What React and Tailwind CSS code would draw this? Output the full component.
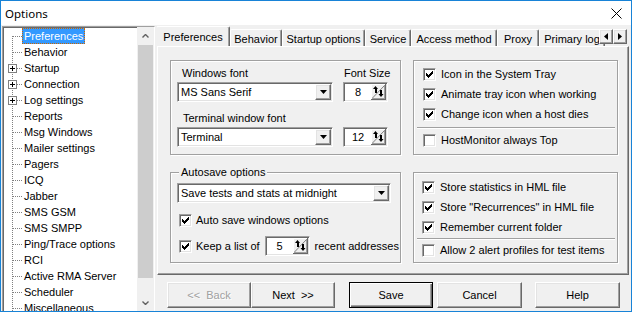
const SUNKEN = 'border border-t-[#a0a0a0] border-l-[#a0a0a0] border-r-white border-b-white shadow-[inset_1px_1px_0_#696969,inset_-1px_-1px_0_#e3e3e3]'
const RAISED = 'border border-t-white border-l-white border-r-[#696969] border-b-[#696969] shadow-[inset_-1px_-1px_0_#a0a0a0,inset_1px_1px_0_#e3e3e3]'
const ETCHED = 'border border-[#a0a0a0] shadow-[inset_1px_1px_0_#fff,1px_1px_0_#fff]'

const treeItems = [
  { label: 'Preferences', selected: true },
  { label: 'Behavior' },
  { label: 'Startup', plus: true },
  { label: 'Connection', plus: true },
  { label: 'Log settings', plus: true },
  { label: 'Reports' },
  { label: 'Msg Windows' },
  { label: 'Mailer settings' },
  { label: 'Pagers' },
  { label: 'ICQ' },
  { label: 'Jabber' },
  { label: 'SMS GSM' },
  { label: 'SMS SMPP' },
  { label: 'Ping/Trace options' },
  { label: 'RCI' },
  { label: 'Active RMA Server' },
  { label: 'Scheduler' },
  { label: 'Miscellaneous' },
]

const tabs = [
  { label: 'Preferences', w: 'w-[74px]', active: true },
  { label: 'Behavior', w: 'w-[52px]' },
  { label: 'Startup options', w: 'w-[83px]' },
  { label: 'Service', w: 'w-[46px]' },
  { label: 'Access method', w: 'w-[86px]' },
  { label: 'Proxy', w: 'w-[42px]' },
  { label: 'Primary log', w: 'w-[66px]' },
]

// classic 7x7 check mark, pixel by pixel
const CHECK = ['......#', '.....##', '#...###', '##.###.', '#####..', '.###...', '..#....']

function CheckBox({ checked }) {
  return (
    <span className={`w-[13px] h-[13px] shrink-0 bg-white flex items-center justify-center ${SUNKEN}`}>
      {checked && (
        <svg width="7" height="7" shapeRendering="crispEdges">
          {CHECK.flatMap((row, y) =>
            row.split('').map((c, x) => (c === '#' ? <rect key={`${x}-${y}`} x={x} y={y} width="1" height="1" fill="#000" /> : null))
          )}
        </svg>
      )}
    </span>
  )
}

function CheckRow({ label, checked = true }) {
  return (
    <div className="h-[20px] flex items-center gap-[5px] whitespace-nowrap">
      <CheckBox checked={checked} />
      <span>{label}</span>
    </div>
  )
}

function Combo({ value, w }) {
  return (
    <div className={`${w} h-[20px] bg-white p-[1px] flex items-stretch ${SUNKEN}`}>
      <span className="flex-1 pl-[2px] flex items-center whitespace-nowrap overflow-hidden">{value}</span>
      <span className={`w-[16px] bg-[#f0f0f0] flex items-center justify-center ${RAISED}`}>
        <svg width="7" height="4"><polygon points="0,0 7,0 3.5,4" fill="#000" /></svg>
      </span>
    </div>
  )
}

function UpDown() {
  return (
    <svg width="15" height="16" className="shrink-0" shapeRendering="crispEdges">
      <rect x="0" y="0" width="15" height="16" fill="#f0f0f0" />
      <line x1="0" y1="0.5" x2="15" y2="0.5" stroke="#fff" />
      <line x1="0.5" y1="0" x2="0.5" y2="16" stroke="#fff" />
      <line x1="0" y1="15.5" x2="15" y2="15.5" stroke="#696969" />
      <line x1="14.5" y1="0" x2="14.5" y2="16" stroke="#696969" />
      <line x1="1" y1="14.5" x2="14" y2="14.5" stroke="#a0a0a0" />
      <line x1="13.5" y1="1" x2="13.5" y2="15" stroke="#a0a0a0" />
      <line x1="1.5" y1="14" x2="13.5" y2="1.5" stroke="#808080" shapeRendering="auto" />
      <polygon points="4.5,2 2,5 7,5" fill="#000" shapeRendering="auto" />
      <rect x="4" y="5" width="2" height="4" fill="#000" />
      <rect x="9" y="6" width="2" height="4" fill="#000" />
      <polygon points="7.5,10 12.5,10 10,13" fill="#000" shapeRendering="auto" />
    </svg>
  )
}

function Spin({ value, w = 'w-[45px]' }) {
  return (
    <div className={`${w} h-[20px] bg-white p-[1px] flex items-center shrink-0 ${SUNKEN}`}>
      <span className="flex-1 text-center">{value}</span>
      <UpDown />
    </div>
  )
}

function TreeRow({ label, plus, selected, first }) {
  return (
    <div className="h-[16px] flex items-center whitespace-nowrap">
      <svg width="18" height="16" className="shrink-0" shapeRendering="crispEdges">
        <line x1="8.5" y1={first ? 8 : 0} x2="8.5" y2="16" stroke="#808080" strokeDasharray="1 1" />
        {plus ? (
          <>
            <rect x="4.5" y="4.5" width="8" height="8" fill="#fff" stroke="#808080" />
            <line x1="6" y1="8.5" x2="11" y2="8.5" stroke="#000" />
            <line x1="8.5" y1="6" x2="8.5" y2="11" stroke="#000" />
            <line x1="13" y1="8.5" x2="18" y2="8.5" stroke="#808080" strokeDasharray="1 1" />
          </>
        ) : (
          <line x1="9" y1="8.5" x2="18" y2="8.5" stroke="#808080" strokeDasharray="1 1" />
        )}
      </svg>
      {selected ? (
        <span className="h-[16px] leading-[14px] px-[1px] bg-[#3399ff] text-white border border-dotted border-[#cc6600]">{label}</span>
      ) : (
        <span className="px-[2px]">{label}</span>
      )}
    </div>
  )
}

function Chevron({ down }) {
  return (
    <svg width="7" height="4">
      <path d={down ? 'M0.5 0.5L3.5 3.5L6.5 0.5' : 'M0.5 3.5L3.5 0.5L6.5 3.5'} stroke="#606060" strokeWidth="1.4" fill="none" />
    </svg>
  )
}

function Button({ children, w, disabled, isDefault, className = '' }) {
  const frame = isDefault
    ? 'border border-black shadow-[inset_1px_1px_0_#fff,inset_-1px_-1px_0_#696969,inset_-2px_-2px_0_#a0a0a0]'
    : RAISED
  return (
    <div className={`${w} h-[26px] flex items-center justify-center whitespace-pre ${frame} ${disabled ? 'text-[#a0a0a0] [text-shadow:1px_1px_0_#fff]' : ''} ${className}`}>
      {children}
    </div>
  )
}

export default function App() {
  return (
    <div className="w-[632px] h-[312px] overflow-hidden border border-[#1883d7] bg-[#f0f0f0] flex flex-col text-[11px] leading-[13px] text-black font-['Liberation_Sans',Arial,sans-serif]">
      {/* title bar */}
      <div className="h-[24px] shrink-0 bg-white flex items-center justify-between pl-[4px] pr-[9px]">
        <span className="font-['Noto_Sans',sans-serif] text-[11.5px]">Options</span>
        <svg width="11" height="11">
          <path d="M0.5 0.5L10.5 10.5M10.5 0.5L0.5 10.5" stroke="#000" strokeWidth="1" />
        </svg>
      </div>

      <div className="flex-1 flex min-h-0">
        {/* tree */}
        <div className={`ml-[1px] mt-[1px] w-[153px] flex bg-white border border-b-0 border-t-[#a0a0a0] border-l-[#a0a0a0] border-r-white shadow-[inset_1px_1px_0_#696969,inset_-1px_0_0_#e3e3e3]`}>
          <div className="flex-1 overflow-hidden pl-[1px] pt-[1px]">
            {treeItems.map((it, i) => (
              <TreeRow key={it.label} {...it} first={i === 0} />
            ))}
          </div>
          <div className="w-[17px] shrink-0 bg-[#f0f0f0] flex flex-col">
            <div className="h-[18px] flex items-center justify-center">
              <Chevron />
            </div>
            <div className="h-[233px] mx-[1px] bg-[#cdcdcd]" />
            <div className="flex-1" />
            <div className="h-[17px] flex items-center justify-center">
              <Chevron down />
            </div>
          </div>
        </div>

        {/* right side */}
        <div className="ml-[2px] w-[472px] flex flex-col">
          <div className="relative h-[20px] mt-[1px] flex items-end shrink-0 overflow-hidden">
            {tabs.map((t) => (
              <div
                key={t.label}
                className={`${t.w} shrink-0 flex items-center justify-center whitespace-nowrap rounded-t-[2px] border-t border-l border-r border-t-white border-l-white border-r-[#696969] shadow-[inset_-1px_0_0_#a0a0a0] ${
                  t.active ? 'relative z-10 -ml-[1px] h-[21px] -mb-[1px] bg-[#f0f0f0]' : 'h-[17px] pt-[2px]'
                }`}
              >
                {t.label}
              </div>
            ))}
            <div className="absolute right-[2px] top-[3px] flex z-20">
              <span className={`w-[14px] h-[15px] bg-[#f0f0f0] flex items-center justify-center ${RAISED}`}>
                <svg width="4" height="7"><polygon points="4,0 4,7 0,3.5" fill="#000" /></svg>
              </span>
              <span className={`w-[14px] h-[15px] bg-[#f0f0f0] flex items-center justify-center ${RAISED}`}>
                <svg width="4" height="7"><polygon points="0,0 0,7 4,3.5" fill="#000" /></svg>
              </span>
            </div>
          </div>

          {/* tab page */}
          <div className="h-[229px] shrink-0 border-t border-l border-r border-b border-t-white border-l-white border-r-[#696969] border-b-[#696969] shadow-[inset_-1px_-1px_0_#a0a0a0] pt-[13px] pl-[12px]">
            <div className="grid grid-cols-[231px_205px] grid-rows-[95px_91px] gap-x-[12px] gap-y-[17px]">
              {/* fonts */}
              <div className={`${ETCHED} pt-[6px] pl-[6px]`}>
                <div className="flex gap-[10px]">
                  <span className="w-[156px] pl-[5px]">Windows font</span>
                  <span className="pl-[1px]">Font Size</span>
                </div>
                <div className="flex gap-[10px] mt-[2px]">
                  <Combo value="MS Sans Serif" w="w-[156px]" />
                  <Spin value="8" />
                </div>
                <div className="mt-[10px] pl-[6px]">Terminal window font</div>
                <div className="flex gap-[10px] mt-[2px]">
                  <Combo value="Terminal" w="w-[156px]" />
                  <Spin value="12" />
                </div>
              </div>

              {/* tray */}
              <div className={`${ETCHED} pt-[3px] pl-[9px]`}>
                <CheckRow label="Icon in the System Tray" />
                <CheckRow label="Animate tray icon when working" />
                <CheckRow label="Change icon when a host dies" />
                <div className="-ml-[6px] mr-[2px] mt-[3px] border-t border-b border-t-[#a0a0a0] border-b-white" />
                <div className="mt-[1px]">
                  <CheckRow label="HostMonitor always Top" checked={false} />
                </div>
              </div>

              {/* autosave */}
              <div className={`${ETCHED} relative pt-[10px] pl-[6px]`}>
                <span className="absolute -top-[7px] left-[8px] px-[2px] bg-[#f0f0f0]">Autosave options</span>
                <Combo value="Save tests and stats at midnight" w="w-[214px]" />
                <div className="mt-[7px] pl-[2px] h-[20px] flex items-center gap-[4px]">
                  <CheckBox checked />
                  <span>Auto save windows options</span>
                </div>
                <div className="mt-[6px] pl-[2px] h-[20px] flex items-center gap-[4px] whitespace-nowrap">
                  <CheckBox checked />
                  <span>Keep a list of</span>
                  <span className="ml-[1px]">
                    <Spin value="5" />
                  </span>
                  <span className="ml-[1px]">recent addresses</span>
                </div>
              </div>

              {/* files */}
              <div className={`${ETCHED} pt-[4px] pl-[8px]`}>
                <CheckRow label="Store statistics in HML file" />
                <CheckRow label={'Store "Recurrences" in HML file'} />
                <CheckRow label="Remember current folder" />
                <div className="-ml-[5px] mr-[2px] mt-[1px] border-t border-b border-t-[#a0a0a0] border-b-white" />
                <CheckRow label="Allow 2 alert profiles for test items" checked={false} />
              </div>
            </div>
          </div>

          {/* buttons */}
          <div className="mt-[7px] pl-[10px] flex">
            <Button w="w-[84px]" disabled>{'<<  Back'}</Button>
            <Button w="w-[84px]">{'Next  >>'}</Button>
            <Button w="w-[84px]" isDefault className="ml-[14px]">Save</Button>
            <Button w="w-[85px]" className="ml-[4px]">Cancel</Button>
            <Button w="w-[85px]" className="ml-[13px]">Help</Button>
          </div>
        </div>
      </div>
    </div>
  )
}
